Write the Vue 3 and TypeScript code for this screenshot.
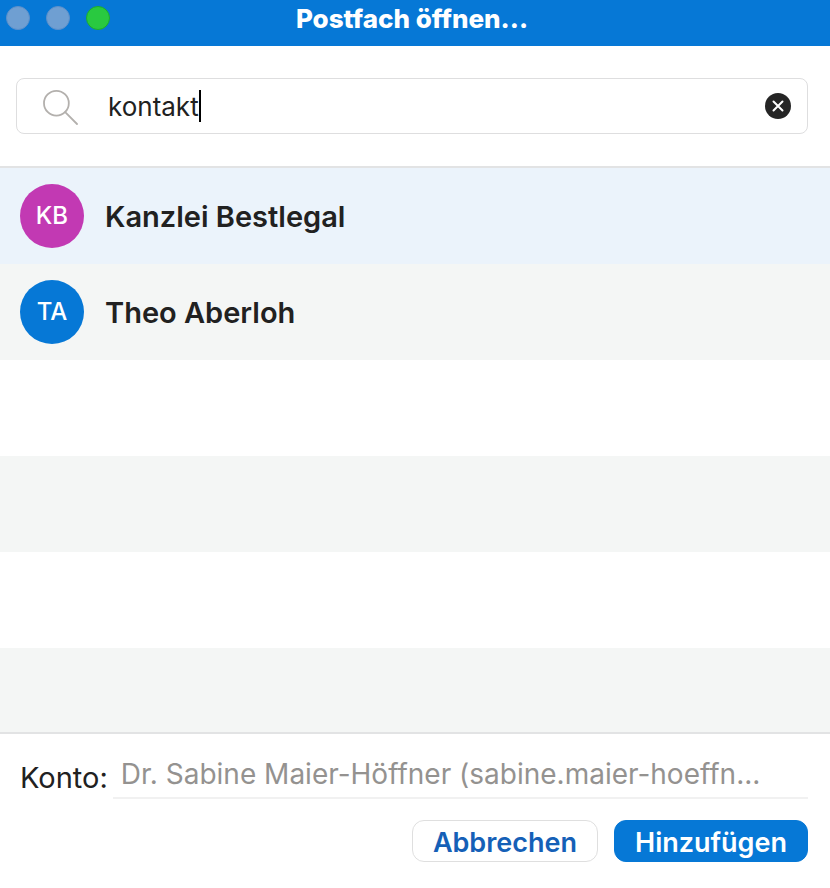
<script setup lang="ts">
import { nextTick, onMounted, ref } from 'vue'

interface Mailbox {
  name: string
  initials: string
  tone: 'magenta' | 'blue'
}

const query = ref('kontakt')
const selected = ref(0)
const searchInput = ref<HTMLInputElement | null>(null)

const mailboxes: Mailbox[] = [
  { name: 'Kanzlei Bestlegal', initials: 'KB', tone: 'magenta' },
  { name: 'Theo Aberloh', initials: 'TA', tone: 'blue' },
]

const account = 'Dr. Sabine Maier-Höffner (sabine.maier-hoeffn...'

async function clearSearch(): Promise<void> {
  query.value = ''
  await nextTick()
  searchInput.value?.focus()
}

onMounted(() => searchInput.value?.focus())
</script>

<template>
  <main class="dialog">
    <header class="titlebar">
      <div class="lights">
        <button class="light" type="button" aria-label="Schließen"></button>
        <button class="light" type="button" aria-label="Minimieren"></button>
        <button class="light zoom" type="button" aria-label="Zoomen"></button>
      </div>
      <h1 class="title">Postfach öffnen...</h1>
    </header>

    <div class="search">
      <div class="field">
        <label class="entry">
          <svg class="lens" viewBox="0 0 36 36" aria-hidden="true">
            <circle cx="14.4" cy="14.2" r="12.4" />
            <path d="M23.2 23.2 35 35" />
          </svg>
          <span class="typed">
            <input ref="searchInput" v-model="query" class="query" type="text" aria-label="Postfach suchen" />
            <span class="caret"></span>
          </span>
        </label>
        <button class="clear" type="button" aria-label="Suche löschen" @click="clearSearch">
          <svg viewBox="0 0 26 26" aria-hidden="true">
            <circle cx="13" cy="13" r="13" />
            <path d="M8.5 8.5 17.5 17.5M17.5 8.5 8.5 17.5" />
          </svg>
        </button>
      </div>
    </div>

    <ul class="results">
      <li v-for="(box, index) in mailboxes" :key="box.name">
        <button class="row" :class="{ selected: index === selected }" type="button" @click="selected = index">
          <span class="avatar" :class="box.tone">{{ box.initials }}</span>
          <span class="name">{{ box.name }}</span>
        </button>
      </li>
    </ul>

    <footer class="footer">
      <div class="account">
        <label class="account-label" for="account">Konto:</label>
        <select id="account" class="account-select" disabled>
          <option>{{ account }}</option>
        </select>
      </div>
      <div class="actions">
        <button class="action" type="button">Abbrechen</button>
        <button class="action primary" type="button">Hinzufügen</button>
      </div>
    </footer>
  </main>
</template>

<style>
body {
  margin: 0;
  background: #fff;
}
</style>

<style scoped>
.dialog {
  display: flex;
  flex-direction: column;
  height: 100vh;
  font-family: Inter, "Liberation Sans", sans-serif;
  color: #212121;
}

button,
input,
select {
  margin: 0;
  padding: 0;
  border: 0;
  background: none;
  font: inherit;
  color: inherit;
  outline: none;
}

.titlebar {
  display: grid;
  grid-template-columns: 1fr auto 1fr;
  padding: 0 12px 8px 6px;
  align-items: start;
  background: #0678d6;
}

.lights {
  display: flex;
  gap: 16px;
  padding-top: 6px;
}

.light {
  box-sizing: border-box;
  width: 24px;
  height: 24px;
  border: 1px solid #5c8fca;
  border-radius: 50%;
  background: #6f9fd2;
}

.light.zoom {
  border-color: #1bac2c;
  background: #29c940;
}

.title {
  margin: 0;
  font-size: 26px;
  line-height: 38px;
  font-weight: 800;
  color: #fff;
}

.search {
  padding: 32px 22px 32px 16px;
  border-bottom: 2px solid #e2e3e4;
}

.field {
  display: flex;
  align-items: center;
  padding: 0 16px 0 25px;
  border: 1px solid #dededf;
  border-radius: 8px;
}

.entry {
  display: flex;
  flex: 1;
  gap: 30px;
  align-items: center;
  height: 54px;
  cursor: text;
}

.lens {
  width: 36px;
  height: 36px;
  margin-top: 2px;
  fill: none;
  stroke: #b3b0ad;
  stroke-width: 1.8;
  stroke-linecap: round;
}

.typed {
  display: flex;
  align-items: center;
}

.query {
  field-sizing: content;
  padding-top: 2px;
  font-size: 26px;
  line-height: 32px;
  caret-color: transparent;
}

.caret {
  width: 2px;
  height: 32px;
  background: #000;
}

.clear {
  width: 26px;
  height: 26px;
}

.clear svg {
  display: block;
  fill: #252525;
}

.clear path {
  stroke: #fff;
  stroke-width: 2;
  stroke-linecap: round;
}

.results {
  flex: 1 1 0;
  min-height: 0;
  margin: 0;
  padding: 0;
  overflow: hidden;
  list-style: none;
  background: repeating-linear-gradient(#fff 0 96px, #f4f6f5 96px 192px);
}

.row {
  display: flex;
  gap: 21px;
  align-items: center;
  width: 100%;
  height: 96px;
  padding: 0 20px;
  text-align: left;
}

.row.selected {
  background: #ebf3fb;
}

.avatar {
  width: 64px;
  border-radius: 50%;
  font-size: 24px;
  line-height: 64px;
  font-weight: 500;
  text-align: center;
  color: #fff;
}

.magenta {
  background: #c239b3;
}

.blue {
  background: #0678d6;
}

.name {
  padding-top: 2px;
  font-size: 29px;
  line-height: 36px;
  font-weight: 600;
}

.footer {
  display: flex;
  flex-direction: column;
  gap: 21px;
  padding: 17px 22px 26px 20px;
  border-top: 2px solid #e2e3e4;
}

.account {
  display: flex;
  gap: 5px;
  align-items: flex-end;
}

.account-label {
  font-size: 29px;
  line-height: 38px;
  padding-bottom: 2px;
}

.account-select {
  flex: 1;
  min-width: 0;
  height: 48px;
  padding: 0 8px;
  border-bottom: 2px solid #f1f1f1;
  border-radius: 0;
  appearance: none;
  font-size: 28px;
  line-height: 40px;
  color: #949290;
  opacity: 1;
}

.actions {
  display: flex;
  gap: 16px;
  justify-content: flex-end;
}

.action {
  padding: 3px 20px 0;
  border: 1px solid #dfdfdf;
  border-radius: 12px;
  font-size: 27px;
  line-height: 37px;
  font-weight: 600;
  color: #1560b7;
}

.action.primary {
  border-color: #0678d6;
  background: #0678d6;
  color: #fff;
}
</style>
